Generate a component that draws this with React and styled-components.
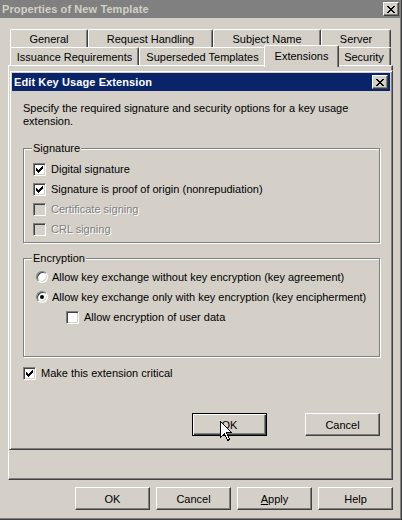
import styled, { createGlobalStyle, css } from 'styled-components'

const face = '#d4d0c8'
const shadow = '#808080'
const dark = '#404040'

const GlobalStyle = createGlobalStyle`
  * { box-sizing: border-box; }
  body {
    margin: 0;
    background: ${face};
  }
  #root {
    width: 402px;
    height: 520px;
  }
`

const Window = styled.div`
  position: relative;
  width: 402px;
  height: 520px;
  display: flex;
  flex-direction: column;
  overflow: hidden;
  background: ${face};
  border-right: 1px solid ${dark};
  border-bottom: 1px solid ${dark};
  box-shadow: inset -1px -1px 0 ${shadow};
  font-family: "Liberation Sans", Arial, sans-serif;
  font-size: 11px;
  color: #000;
`

const TitleBar = styled.div`
  display: flex;
  align-items: center;
  justify-content: space-between;
  height: 18px;
  flex-shrink: 0;
  padding: 0 2px;
  background: ${p => (p.$active ? '#0a246a' : shadow)};
  color: ${p => (p.$active ? '#fff' : face)};
  font-weight: bold;
  font-size: 11px;
  letter-spacing: 0.1px;
`

const CloseButton = styled.span`
  display: flex;
  align-items: center;
  justify-content: center;
  width: 16px;
  height: 14px;
  background: ${face};
  border: 1px solid;
  border-color: #fff ${dark} ${dark} #fff;
  box-shadow: inset -1px -1px 0 ${shadow};
`

const Body = styled.div`
  display: flex;
  flex-direction: column;
  padding: 11px 8px 0 8px;
`

const TabStrip = styled.div`
  display: flex;
  flex-direction: column;
  padding-left: 2px;
`

const TabRow = styled.div`
  display: flex;
  height: 18px;
`

const Tab = styled.div`
  display: flex;
  align-items: center;
  justify-content: center;
  height: 18px;
  flex-shrink: 0;
  background: ${face};
  border-top: 1px solid #fff;
  border-left: 1px solid #fff;
  border-right: 1px solid ${dark};
  border-radius: 2px 2px 0 0;
  box-shadow: inset -1px 0 0 ${shadow};
  white-space: nowrap;

  ${p => p.$selected && css`
    position: relative;
    z-index: 2;
    height: 22px;
    margin: -2px -2px 0;
    padding-bottom: 2px;
  `}
`

const Panel = styled.div`
  height: 415px;
  background: ${face};
  border: 1px solid;
  border-color: #fff ${dark} ${dark} #fff;
  box-shadow: inset -1px -1px 0 ${shadow};
`

const ButtonRow = styled.div`
  display: flex;
  justify-content: flex-end;
  gap: ${p => p.$gap || 6}px;
  margin-top: ${p => p.$top || 7}px;
`

const Button = styled.button`
  width: 75px;
  height: 23px;
  padding: 0;
  font: inherit;
  color: #000;
  background: ${face};
  border: 1px solid;
  border-color: #fff ${dark} ${dark} #fff;
  box-shadow: inset -1px -1px 0 ${shadow};

  ${p => p.$default && css`
    border-color: #000;
    box-shadow: inset 1px 1px 0 #fff, inset -1px -1px 0 ${dark}, inset -2px -2px 0 ${shadow};
  `}
`

const Dialog = styled.div`
  position: absolute;
  left: 9px;
  top: 70px;
  width: 384px;
  height: 380px;
  z-index: 3;
  display: flex;
  flex-direction: column;
  padding: 2px;
  background: ${face};
  border: 1px solid;
  border-color: ${face} ${dark} ${dark} ${face};
  box-shadow: inset 1px 1px 0 #fff, inset -1px -1px 0 ${shadow};
`

const DialogBody = styled.div`
  display: flex;
  flex-direction: column;
  padding: 11px 10px 0 11px;
`

const Description = styled.p`
  margin: 0;
  line-height: 13px;
`

const GroupBox = styled.div`
  position: relative;
  display: flex;
  flex-direction: column;
  margin-top: ${p => p.$top}px;
  padding: ${p => p.$pad};
  border: 1px solid ${shadow};
  box-shadow: 1px 1px 0 #fff, inset 1px 1px 0 #fff;
`

const GroupLabel = styled.span`
  position: absolute;
  top: -7px;
  left: 8px;
  padding: 0 1px;
  line-height: 13px;
  background: ${face};
`

const OptionRow = styled.label`
  display: flex;
  align-items: center;
  gap: ${p => p.$gap || 5}px;
  height: 20px;
  margin-left: ${p => p.$indent || 0}px;
  margin-top: ${p => p.$top || 0}px;
  color: ${p => (p.$disabled ? shadow : '#000')};
  text-shadow: ${p => (p.$disabled ? '1px 1px 0 #fff' : 'none')};
  white-space: nowrap;
`

const CheckBox = styled.span`
  display: flex;
  align-items: center;
  justify-content: center;
  width: 13px;
  height: 13px;
  flex-shrink: 0;
  background: ${p => (p.$disabled ? face : '#fff')};
  border: 1px solid;
  border-color: ${shadow} #fff #fff ${shadow};
  box-shadow: inset 1px 1px 0 ${dark}, inset -1px -1px 0 ${face};
`

const Radio = styled.span`
  position: relative;
  width: 12px;
  height: 12px;
  flex-shrink: 0;
  border-radius: 50%;
  background: #fff;
  border: 1px solid;
  border-color: ${shadow} #fff #fff ${shadow};
  box-shadow: inset 1px 1px 0 ${dark}, inset -1px -1px 0 ${face};

  ${p => p.$checked && css`
    &::after {
      content: '';
      position: absolute;
      left: 3px;
      top: 3px;
      width: 4px;
      height: 4px;
      border-radius: 50%;
      background: #000;
    }
  `}
`

const Cursor = styled.svg`
  position: absolute;
  left: 220px;
  top: 421px;
  z-index: 10;
`

const CloseGlyph = () => (
  <svg width="8" height="7" viewBox="0 0 8 7" shapeRendering="crispEdges">
    <path
      d="M0 0h2v1H0zM6 0h2v1H6zM1 1h2v1H1zM5 1h2v1H5zM2 2h4v1H2zM3 3h2v1H3zM2 4h4v1H2zM1 5h2v1H1zM5 5h2v1H5zM0 6h2v1H0zM6 6h2v1H6z"
      fill="#000"
    />
  </svg>
)

const CheckMark = () => (
  <svg width="7" height="7" viewBox="0 0 7 7" shapeRendering="crispEdges">
    <path
      d="M0 2h1v3H0zM1 3h1v3H1zM2 4h1v3H2zM3 3h1v3H3zM4 2h1v3H4zM5 1h1v3H5zM6 0h1v3H6z"
      fill="#000"
    />
  </svg>
)

const Check = ({ label, checked, disabled, indent, top, gap }) => (
  <OptionRow $disabled={disabled} $indent={indent} $top={top} $gap={gap}>
    <CheckBox $disabled={disabled}>{checked && <CheckMark />}</CheckBox>
    {label}
  </OptionRow>
)

const RadioOption = ({ label, checked }) => (
  <OptionRow $gap={4}>
    <Radio $checked={checked} />
    {label}
  </OptionRow>
)

const topTabs = [
  { label: 'General', width: 78 },
  { label: 'Request Handling', width: 125 },
  { label: 'Subject Name', width: 108 },
  { label: 'Server', width: 70 },
]

const bottomTabs = [
  { label: 'Issuance Requirements', width: 129 },
  { label: 'Superseded Templates', width: 127 },
  { label: 'Extensions', width: 71, selected: true },
  { label: 'Security', width: 54 },
]

export default function App() {
  return (
    <>
      <GlobalStyle />
      <Window>
        <TitleBar>
          <span>Properties of New Template</span>
          <CloseButton><CloseGlyph /></CloseButton>
        </TitleBar>

        <Body>
          <TabStrip>
            <TabRow>
              {topTabs.map(t => (
                <Tab key={t.label} style={{ width: t.width }}>{t.label}</Tab>
              ))}
            </TabRow>
            <TabRow>
              {bottomTabs.map(t => (
                <Tab
                  key={t.label}
                  $selected={t.selected}
                  style={{ width: t.selected ? t.width + 4 : t.width }}
                >
                  {t.label}
                </Tab>
              ))}
            </TabRow>
          </TabStrip>
          <Panel />

          <ButtonRow>
            <Button>OK</Button>
            <Button>Cancel</Button>
            <Button><u>A</u>pply</Button>
            <Button>Help</Button>
          </ButtonRow>
        </Body>

        <Dialog>
          <TitleBar $active>
            <span>Edit Key Usage Extension</span>
            <CloseButton><CloseGlyph /></CloseButton>
          </TitleBar>
          <DialogBody>
            <Description>
              Specify the required signature and security options for a key usage extension.
            </Description>

            <GroupBox $top={20} $pad="10px 0 3px 9px">
              <GroupLabel>Signature</GroupLabel>
              <Check label="Digital signature" checked />
              <Check label="Signature is proof of origin (nonrepudiation)" checked />
              <Check label="Certificate signing" disabled />
              <Check label="CRL signing" disabled />
            </GroupBox>

            <GroupBox $top={15} $pad="8px 0 29px 12px">
              <GroupLabel>Encryption</GroupLabel>
              <RadioOption label="Allow key exchange without key encryption (key agreement)" />
              <RadioOption label="Allow key exchange only with key encryption (key encipherment)" checked />
              <Check label="Allow encryption of user data" indent={30} />
            </GroupBox>

            <Check label="Make this extension critical" checked top={6} />

            <ButtonRow $top={30} $gap={38}>
              <Button $default>OK</Button>
              <Button>Cancel</Button>
            </ButtonRow>
          </DialogBody>
        </Dialog>

        <Cursor width="12" height="20" viewBox="0 0 12 20" shapeRendering="crispEdges">
          <path
            d="M0.5 0.5 V16.5 L4.5 12.5 L7.5 19.5 L9.5 18.5 L6.5 11.5 H11.5 Z"
            fill="#fff"
            stroke="#000"
            strokeWidth="1"
          />
        </Cursor>
      </Window>
    </>
  )
}
